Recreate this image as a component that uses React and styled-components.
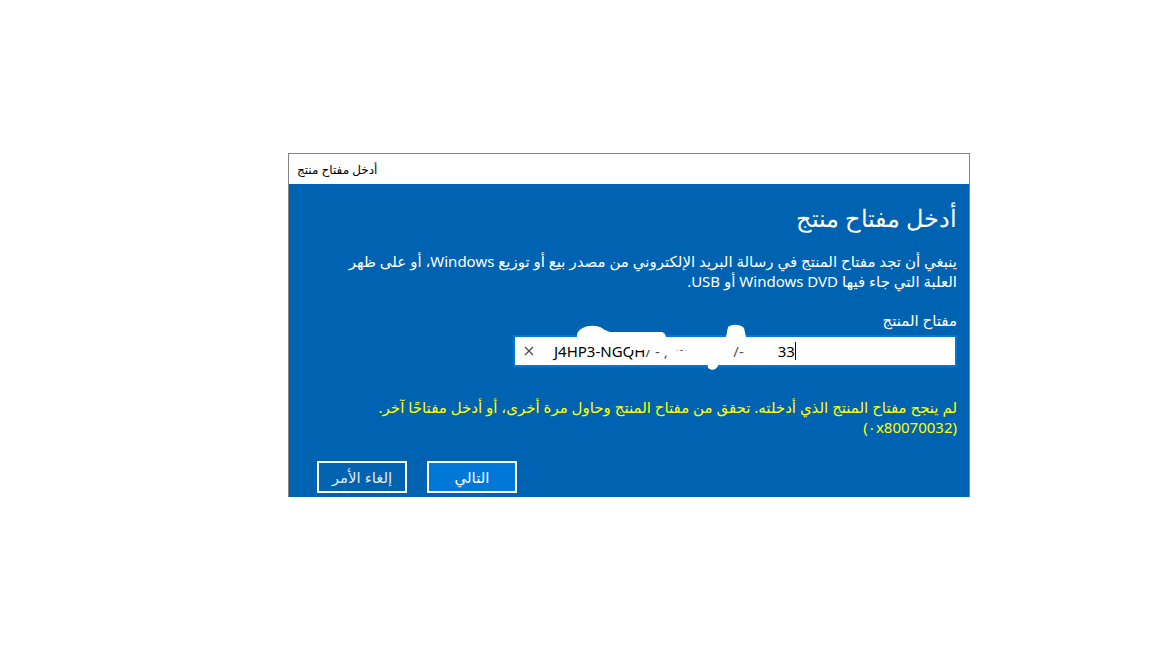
import React from 'react';
import styled, { createGlobalStyle } from 'styled-components';

const GlobalStyle = createGlobalStyle`
  body {
    margin: 0;
    background: #ffffff;
    font-family: "Noto Sans", "DejaVu Sans", sans-serif;
  }
`;

const Dialog = styled.div`
  margin: 153px 0 0 288px;
  width: 682px;
  box-sizing: border-box;
  border: 1px solid #858585;
  border-bottom: none;
`;

const TitleBar = styled.div`
  height: 30px;
  display: flex;
  align-items: center;
  padding-left: 8px;
  background: #ffffff;
  color: #000000;
  font-size: 12px;
`;

const Body = styled.div`
  direction: rtl;
  height: 313px;
  box-sizing: border-box;
  padding: 18px 12px 0 28px;
  background: #0063b1;
  color: #ffffff;
  display: flex;
  flex-direction: column;
`;

const Heading = styled.h1`
  margin: 0;
  font-size: 24px;
  font-weight: 300;
  line-height: 32px;
`;

const Text = styled.p`
  margin: ${p => p.$top}px 0 0;
  font-size: 15px;
  line-height: 20px;
  color: ${p => p.$color || '#ffffff'};
`;

const Code = styled.span`
  direction: ltr;
  unicode-bidi: isolate;
`;

const Field = styled.div`
  position: relative;
  direction: ltr;
  align-self: flex-start;
  margin-top: 5px;
  width: 444px;
  height: 32px;
  box-sizing: border-box;
  border: 2px solid #0078d7;
  background: #ffffff;
  display: flex;
  align-items: center;
  padding-left: 9px;
  color: #000000;
  font-size: 15px;
`;

const ClearIcon = styled.svg`
  width: 10px;
  height: 10px;
  margin-right: 20px;
  flex: none;
`;

const Key = styled.span`
  white-space: pre;
  margin-left: ${p => p.$gap || 0}px;
  color: ${p => p.$faint ? '#555555' : '#000000'};
`;

const Caret = styled.span`
  width: 1px;
  height: 18px;
  background: #000000;
`;

const Smudge = styled.svg`
  position: absolute;
  left: 55px;
  top: -17px;
  width: 190px;
  height: 56px;
  pointer-events: none;
`;

const Buttons = styled.div`
  display: flex;
  justify-content: flex-end;
  gap: 20px;
  margin-top: 24px;
`;

const Button = styled.button`
  width: 90px;
  height: 32px;
  box-sizing: border-box;
  border: 2px solid #ffffff;
  background: ${p => p.$primary ? '#0078d7' : '#0063b1'};
  color: ${p => p.$primary ? '#ffffff' : '#e6e6e6'};
  font-family: inherit;
  font-size: 15px;
  padding: 0;
`;

export default function App() {
  return (
    <>
      <GlobalStyle />
      <Dialog>
        <TitleBar>أدخل مفتاح منتج</TitleBar>
        <Body>
          <Heading>أدخل مفتاح منتج</Heading>
          <Text $top={17}>
            ينبغي أن تجد مفتاح المنتج في رسالة البريد الإلكتروني من مصدر بيع أو توزيع Windows، أو على ظهر
            <br />
            العلبة التي جاء فيها Windows DVD أو USB.
          </Text>
          <Text $top={19}>مفتاح المنتج</Text>
          <Field>
            <ClearIcon viewBox="0 0 10 10">
              <path d="M1 1 L9 9 M9 1 L1 9" stroke="#444" strokeWidth="1.1" fill="none" />
            </ClearIcon>
            <Key>J4HP3-NGQH</Key>
            <Key $faint>{'/ - ,  \'⁰⁷'}</Key>
            <Key $gap={44} $faint>{'/-'}</Key>
            <Key $gap={34}>33</Key>
            <Caret />
            <Smudge viewBox="0 0 190 56">
              <path d="M7 14 C10 7 20 4 30 7 C34 9 36 11 40 12 L92 12 C95 13 96 15 96 19 L7 19 Z" fill="#fff" />
              <path d="M60 18 L150 18 L148 46 C146 50 142 51 138 48 L136 30 L60 30 Z" fill="#fff" />
              <path d="M156 17 L158 7 C162 4 170 4 174 8 L176 17 Z" fill="#fff" />
            </Smudge>
          </Field>
          <Text $top={30} $color="#ffff00">
            لم ينجح مفتاح المنتج الذي أدخلته. تحقق من مفتاح المنتج وحاول مرة أخرى، أو أدخل مفتاحًا آخر.
            <br />
            <Code>(٠x80070032)</Code>
          </Text>
          <Buttons>
            <Button $primary>التالي</Button>
            <Button>إلغاء الأمر</Button>
          </Buttons>
        </Body>
      </Dialog>
    </>
  );
}
